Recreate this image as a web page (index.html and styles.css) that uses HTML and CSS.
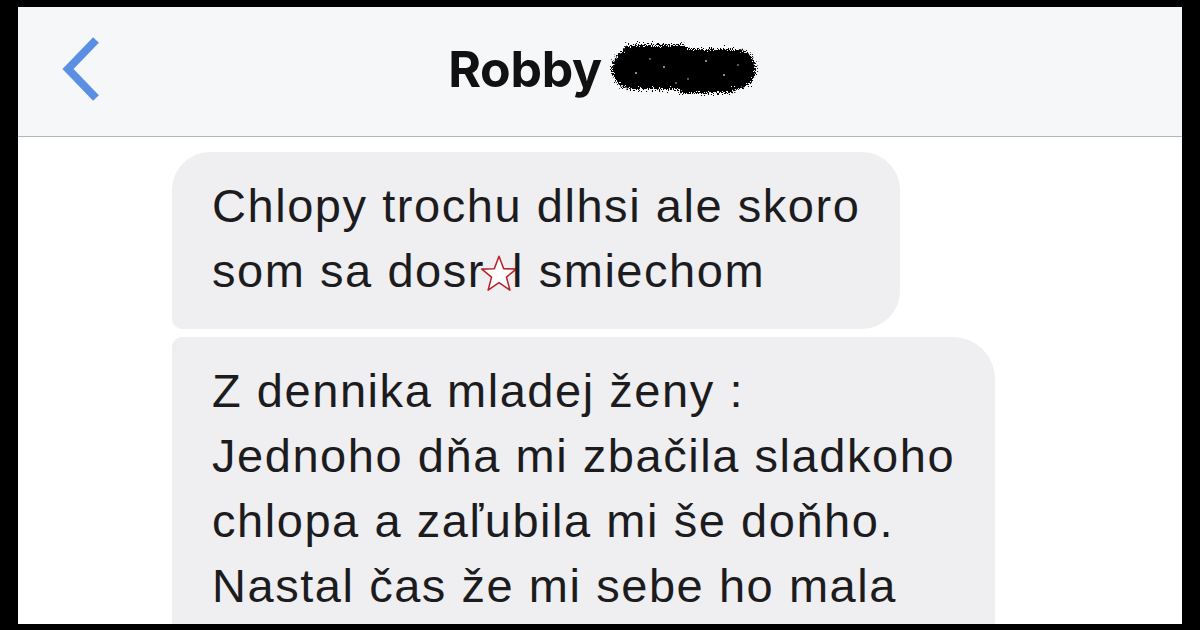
FILE: index.html
```html
<!DOCTYPE html>
<html lang="sk">
<head>
<meta charset="utf-8">
<title>Robby</title>
<link rel="stylesheet" href="styles.css">
</head>
<body>
<div class="frame">
  <header class="navbar">
    <a class="back" aria-label="Späť">
      <svg width="44" height="70" viewBox="0 0 44 70"><polyline points="36,7 8,36 36,65" fill="none" stroke="#5a8fe2" stroke-width="8" stroke-linecap="butt" stroke-linejoin="miter"/></svg>
    </a>
    <div class="title">
      <span class="name">Robby</span>
      <svg class="scribble" width="156" height="62" viewBox="0 0 156 62">
        <defs>
          <filter id="noise" x="-10%" y="-20%" width="120%" height="140%">
            <feTurbulence type="fractalNoise" baseFrequency="0.9" numOctaves="2" seed="4" result="t"/>
            <feDisplacementMap in="SourceGraphic" in2="t" scale="12" xChannelSelector="R" yChannelSelector="G"/>
          </filter>
        </defs>
        <g filter="url(#noise)">
          <rect x="6" y="10" width="144" height="40" rx="20" fill="#000"/>
          <rect x="18" y="6" width="64" height="8" rx="4" fill="#000"/>
          <rect x="72" y="46" width="56" height="8" rx="4" fill="#000"/>
        </g>
        <g fill="#fff" opacity="0.8">
          <circle cx="30" cy="34" r="0.9"/><circle cx="58" cy="28" r="0.9"/><circle cx="82" cy="40" r="0.8"/>
          <circle cx="100" cy="22" r="0.9"/><circle cx="118" cy="36" r="0.9"/><circle cx="132" cy="26" r="0.8"/>
          <circle cx="70" cy="44" r="0.8"/><circle cx="44" cy="20" r="0.8"/>
        </g>
      </svg>
    </div>
  </header>
  <main class="thread">
    <div class="bubble first">Chlopy trochu dlhsi ale skoro<br>som sa dosr<svg class="star" width="38" height="40" viewBox="0 0 34 36"><path d="M17 2 L21.2 13.2 L32.5 13.6 L23.7 20.8 L26.8 32.5 L17 25.8 L7.2 32.5 L10.3 20.8 L1.5 13.6 L12.8 13.2 Z" fill="#fff" stroke="#b8232a" stroke-width="1.4" stroke-linejoin="round"/></svg>l smiechom</div>
    <div class="bubble second">Z dennika mladej ženy :<br>Jednoho dňa mi zbačila sladkoho<br>chlopa a zaľubila mi še doňho.<br>Nastal čas že mi sebe ho mala</div>
  </main>
</div>
</body>
</html>
```
FILE: styles.css
```css
html, body {
  margin: 0;
  padding: 0;
  background: #000;
  width: 1200px;
  height: 630px;
  overflow: hidden;
}
.frame {
  margin: 7px 18px 0 18px;
  height: 617px;
  background: #fff;
  display: flex;
  flex-direction: column;
  overflow: hidden;
  font-family: "Liberation Sans", Arial, sans-serif;
}
.navbar {
  position: relative;
  height: 130px;
  flex: 0 0 auto;
  background: #f6f7f9;
  border-bottom: 1px solid #b5b5b7;
  display: flex;
  align-items: center;
  justify-content: center;
  padding: 0 0 6px 10px;
  box-sizing: border-box;
}
.back {
  position: absolute;
  left: 42px;
  top: 26px;
  display: block;
}
.back svg { display: block; }
.title {
  display: flex;
  align-items: center;
  gap: 4px;
}
.name {
  font-family: "Inter", "Liberation Sans", sans-serif;
  font-weight: 700;
  font-size: 50px;
  color: #111;
  letter-spacing: -0.3px;
}
.scribble {
  display: block;
  margin-top: 2px;
}
.thread {
  padding: 15px 0 0 154px;
  display: flex;
  flex-direction: column;
  align-items: flex-start;
  gap: 8px;
}
.bubble {
  background: #efeef0;
  color: #1c1c1e;
  font-size: 47px;
  line-height: 65px;
  letter-spacing: 1.55px;
  padding: 21px 40px 26px 40px;
  white-space: nowrap;
  flex: 0 0 auto;
}
.bubble.first {
  border-radius: 38px 38px 38px 10px;
}
.bubble.second {
  border-radius: 10px 42px 42px 10px;
  padding-top: 21px;
  padding-bottom: 90px;
}
.star {
  vertical-align: -7px;
  margin: 0 -6px 0 -5px;
}
```
